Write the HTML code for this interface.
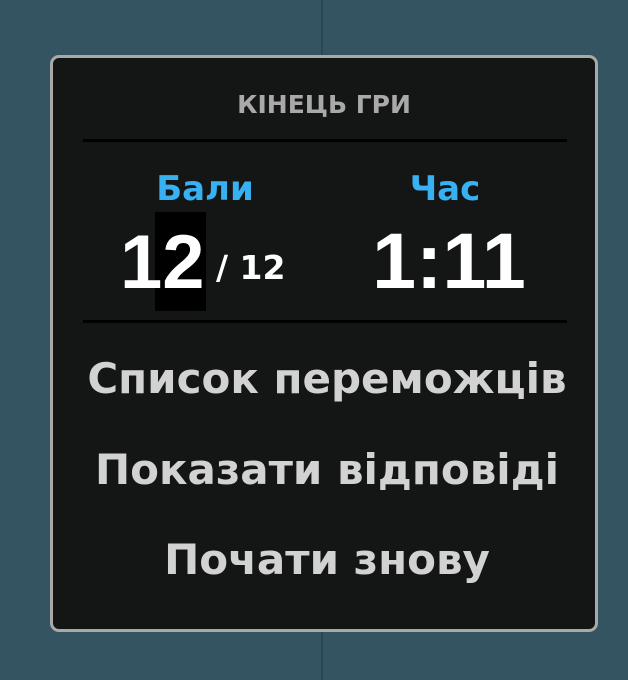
<!DOCTYPE html>
<html><head><meta charset="utf-8"><style>
html,body{margin:0;padding:0}
body{width:628px;height:680px;background:#355462;position:relative;overflow:hidden;font-family:"DejaVu Sans","Liberation Sans",sans-serif}
.vl{position:absolute;left:321px;top:0;width:2px;height:680px;background:#2c4653}
.p{position:absolute;left:50px;top:55px;width:542px;height:571px;border:3px solid #a9a9a9;border-radius:9px;background:#141616}
.t{position:absolute;left:0;width:548px;text-align:center;white-space:nowrap}
.hr{position:absolute;left:30px;width:484px;height:3px;background:#000}
</style></head><body>
<div class="vl"></div>
<div class="p">
<div class="t" style="top:32px;font-size:25px;font-weight:bold;color:#a9a9a9;left:-3px">КІНЕЦЬ ГРИ</div>
<div class="hr" style="top:81px"></div>
<div style="position:absolute;left:72px;width:160px;top:111px;text-align:center;font-size:34px;font-weight:bold;color:#37b1f2">Бали</div>
<div style="position:absolute;left:312px;width:160px;top:111px;text-align:center;font-size:34px;font-weight:bold;color:#37b1f2">Час</div>
<div style="position:absolute;left:102px;top:154px;width:51px;height:99px;background:#000"></div>
<div style="position:absolute;left:67px;top:160px;font-family:'Liberation Sans',sans-serif;font-weight:bold;font-size:76px;color:#fff;line-height:90px">12</div>
<div style="position:absolute;left:163px;top:190px;font-size:33px;font-weight:bold;color:#fff">/ 12</div>
<div style="position:absolute;left:290px;width:212px;top:158px;text-align:center;font-family:'Liberation Sans',sans-serif;font-size:79px;font-weight:bold;color:#fff;line-height:90px">1:11</div>
<div class="hr" style="top:262px"></div>
<div class="t" style="top:296px;font-size:42px;font-weight:bold;color:#d2d2d2">Список переможців</div>
<div class="t" style="top:387px;font-size:42px;font-weight:bold;color:#d2d2d2">Показати відповіді</div>
<div class="t" style="top:477px;font-size:42px;font-weight:bold;color:#d2d2d2">Почати знову</div>
</div>
</body></html>
